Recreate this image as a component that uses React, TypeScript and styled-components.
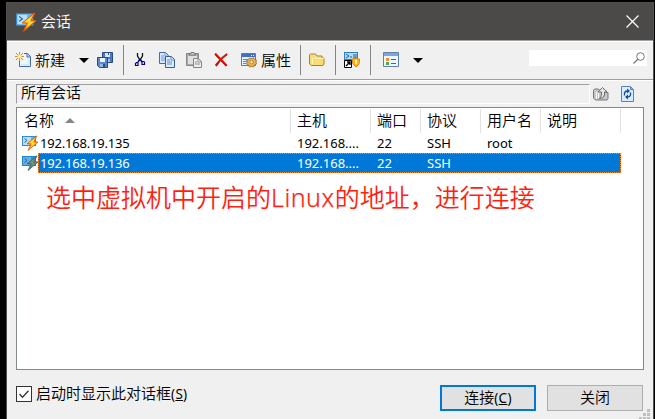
import React from "react";
import styled, { createGlobalStyle } from "styled-components";

const GlobalStyle = createGlobalStyle`
  * { box-sizing: border-box; }
  body {
    margin: 0;
    background: #000;
    color: #000;
    font-family: "Noto Sans", "Noto Sans CJK SC", sans-serif;
    font-size: 15px;
    font-weight: 350;
    line-height: 20px;
    overflow: hidden;
  }
  svg { display: block; flex: none; }
`;

const Desktop = styled.div`
  height: 419px;
  padding: 2px 1px 0 6px;
  background: #000;
`;
const Window = styled.main`
  display: flex;
  flex-direction: column;
  height: 417px;
  background: #f0f0f0;
  border: solid #51504e;
  border-width: 1px 1px 0 1px;
`;
const TitleBar = styled.header`
  display: flex;
  align-items: center;
  height: 37px;
  padding: 0 14px 0 9px;
  background: #4b4a48;
  color: #fff;
`;
const Title = styled.h1`
  flex: 1;
  margin: -2px 0 0 5px;
  font-size: 15px;
  font-weight: 350;
`;
const PlainButton = styled.button`
  display: flex;
  padding: 0;
  border: 0;
  background: none;
`;
const Toolbar = styled.div`
  display: flex;
  align-items: center;
  height: 40px;
  padding: 0 6px 0 8px;
  border-top: 1px solid #a0a0a0;
  border-bottom: 1px solid #a0a0a0;
  box-shadow: inset 0 1px #fff, 0 1px #fff;
`;
const Tool = styled.button<{ $gap?: number }>`
  display: flex;
  align-items: center;
  gap: 4px;
  height: 30px;
  margin: 0 0 0 ${(p) => p.$gap ?? 0}px;
  padding: 0;
  border: 0;
  background: none;
  font: inherit;
  white-space: nowrap;
`;
const Divider = styled.span<{ $gap: number }>`
  width: 1px;
  height: 30px;
  margin-left: ${(p) => p.$gap}px;
  background: #858585;
`;
const Search = styled.label`
  display: flex;
  align-items: center;
  width: 118px;
  height: 16px;
  margin: -4px 0 0 auto;
  padding-right: 2px;
  background: #fff;
`;
const SearchInput = styled.input`
  flex: 1;
  min-width: 0;
  height: 14px;
  padding: 0 2px;
  border: 0;
  outline: 0;
  background: transparent;
`;
const PathRow = styled.div`
  display: flex;
  align-items: center;
  height: 20px;
  margin: 4px 9px 0;
`;
const PathField = styled.div`
  width: 574px;
  height: 20px;
  padding: 0 4px;
  border: 1px solid;
  border-color: #a0a0a0 #fff #fff #a0a0a0;
  line-height: 15px;
  margin-right: 3px;
`;
const List = styled.section`
  height: 263px;
  margin: 3px 9px 0;
  padding-top: 1px;
  background: #fff;
  border: 1px solid #828790;
`;
const HeaderRow = styled.div`
  display: grid;
  grid-template-columns: 274px 80px 50px 60px 60px 80px;
  height: 24px;
`;
const HeaderCell = styled.div<{ $sorted?: boolean }>`
  display: flex;
  align-items: center;
  gap: 11px;
  padding: 0 0 2px ${(p) => (p.$sorted ? 7 : 6)}px;
  border-right: 1px solid #e2e2e2;
  white-space: nowrap;
`;
const SessionRow = styled.div`
  display: flex;
  align-items: center;
  height: 20px;
  padding-left: 5px;
`;
const RowCells = styled.div<{ $selected?: boolean }>`
  display: grid;
  grid-template-columns: 252px 80px 50px 60px 60px 80px;
  width: 583px;
  height: 20px;
  border: 1px dotted ${(p) => (p.$selected ? "#ff8728" : "transparent")};
  background: ${(p) => (p.$selected ? "#0078d7" : "transparent")};
  color: ${(p) => (p.$selected ? "#fff" : "#000")};
`;
const Cell = styled.span<{ $first?: boolean }>`
  padding-left: ${(p) => (p.$first ? 1 : 6)}px;
  font-size: 13px;
  font-weight: 400;
  line-height: 18px;
  letter-spacing: ${(p) => (p.$first ? -0.2 : 0)}px;
`;
const Note = styled.p`
  margin: 7px 0 0 29px;
  color: #ff1e10;
  font-size: 25px;
  font-weight: 350;
  line-height: 34px;
  white-space: nowrap;
`;
const Latin = styled.span`
  letter-spacing: 0.5px;
  -webkit-text-stroke: 0.25px #ff1e10;
`;
const Footer = styled.footer`
  display: flex;
  align-items: flex-start;
  flex: 1;
  padding: 15px 0 0 9px;
`;
const CheckLabel = styled.label`
  display: flex;
  align-items: center;
  gap: 4px;
  height: 18px;
  width: 424px;
  white-space: nowrap;
`;
const CheckText = styled.span`
  margin-top: -2px;
`;
const CheckBox = styled.span`
  display: flex;
  width: 16px;
  height: 16px;
  border: 1px solid #333;
  background: #fff;
`;
const Mnemonic = styled.span`
  font-size: 13.5px;
  font-weight: 400;
  letter-spacing: 0.3px;
`;
const PushButton = styled.button<{ $primary?: boolean }>`
  width: 96px;
  height: 26px;
  margin-right: ${(p) => (p.$primary ? 11 : 0)}px;
  padding: 0 0 2px;
  border: ${(p) => (p.$primary ? "2px solid #0078d7" : "1px solid #adadad")};
  background: #e1e1e1;
  font: inherit;
  line-height: 20px;
`;
const Grip = styled.span`
  align-self: flex-end;
  margin-left: -4px;
`;

const Svg = ({ w = 16, h = 16, children }: { w?: number; h?: number; children: React.ReactNode }) => (
  <svg width={w} height={h} viewBox={`0 0 ${w} ${h}`} fill="none">{children}</svg>
);

const SessionIcon = ({ large, dim }: { large?: boolean; dim?: boolean }) => (
  <svg width={large ? 20 : 16} height={large ? 20 : 16} viewBox="0 0 16 16">
    <path d="M0 1h14v10H0z" fill={dim ? "#2185c9" : "#328bd5"} />
    <path d="M1 2h12v8H1z" fill={dim ? "#65aee2" : "#b9def8"} />
    <path d="M9 2h4v3H9z" fill={dim ? "#3392d3" : "#62b2ed"} />
    <path d="M2.5 3.5 5 5.5l-2.5 2M6 8h2" stroke="#2261a5" fill="none" />
    <path d="M14.5 1 5 8.8l4 .2-3 6.5L16 7l-4-.3L15 1z" fill={dim ? "#61816e" : "#ffad16"} stroke={dim ? "#376579" : "#d65c0b"} strokeWidth=".8" />
    <path d="m13 3-6 5h3l-1 4 5-4h-3z" fill={dim ? "#789079" : "#ffdb38"} />
  </svg>
);
const NewIcon = () => (
  <Svg>
    <path d="M4.5 1.5h8l3 3v10h-11z" fill="#edf6ff" stroke="#426da5" />
    <path d="M12 2v3h3" stroke="#426da5" fill="#bcd7f4" />
    <path d="M6 13h8V7" stroke="#c7ddf4" />
    <path d="M0 1h9v8H4V8H0z" fill="#f5efdc" />
    <path d="M4.5 0v9M0 4.5h9M1 1l7 7M8 1 1 8" stroke="#dc8d18" />
    <path d="M4.5 2.5v4M2.5 4.5h4" stroke="#fff0a0" strokeWidth="2" />
  </Svg>
);
const SaveIcon = () => (
  <Svg>
    <path d="M5.5.5h10v10h-10z" fill="#4d78bd" stroke="#284b87" />
    <path d="M8 1h5v4H8z" fill="#dbe8fa" /><path d="M11 1h1v2h-1z" fill="#355b98" />
    <path d="M8 7h5v3H8z" fill="#a9c2e7" />
    <path d="M.5 5.5h10v10h-8l-2-2z" fill="#5b87cc" stroke="#284b87" />
    <path d="M3 6h5v4H3z" fill="#edf4ff" /><path d="M3 12h5v3H3z" fill="#9bb8e1" />
    <path d="M6 12h2v3H6z" fill="#294d85" />
  </Svg>
);
const CutIcon = () => (
  <Svg w={12} h={16}>
    <path d="M3.5 1v3l2.5 4 2.5-4V1" stroke="#111" strokeWidth="1.3" />
    <path d="m6 7-2 3m2-3 2 3" stroke="#000080" strokeWidth="1.4" />
    <path d="M4 10.5H2.5l-1 1v2H4v-3M8 9.5v3h2.5V10l-1-.5z" stroke="#000080" strokeWidth="1.2" />
  </Svg>
);
const CopyIcon = () => (
  <Svg>
    <path d="M.5.5h6l3 3v8h-9z" fill="#d3e5ff" stroke="#416bab" />
    <path d="M6 1v3h3M2 4h3M2 6h5M2 8h5" stroke="#6d9bda" />
    <path d="M6.5 4.5h6l3 3v8h-9z" fill="#e0edff" stroke="#335f9f" />
    <path d="M12 5v3h3M8 8h3M8 10h5M8 12h5" stroke="#5c8bcb" />
  </Svg>
);
const PasteIcon = () => (
  <Svg>
    <path d="M.5 1.5h12v12H.5z" fill="#aaa" stroke="#858585" />
    <path d="M2 4h9v8H2z" fill="#e0e0e0" />
    <path d="M3.5 3V1.5H5V.5h3v1h1.5V3z" fill="#d3d3d3" stroke="#777" />
    <path d="M7.5 6.5h5l3 3v6h-8z" fill="#eee" stroke="#858585" />
    <path d="M12 7v3h3M9 10h2M9 12h5" stroke="#8c8c8c" />
  </Svg>
);
const DeleteIcon = () => (
  <Svg w={14} h={14}>
    <path d="m1 1 11.5 12M13 1 7 6l-5 7" stroke="#8d1008" strokeWidth="1.8" />
    <path d="M1 1h1l11 11.5M13 1 7 6l-5.5 6" stroke="#f10b05" strokeWidth="1.3" />
  </Svg>
);
const PropertiesIcon = () => (
  <Svg>
    <path d="M.5 1.5h14v12H.5z" fill="#e5f0ff" stroke="#517ac0" />
    <path d="M1 2h13v3H1z" fill="#416fc5" /><path d="M10 3.5h1m1 0h1" stroke="#fff" />
    <path d="M2 7.5h5M2 9.5h4M2 11.5h3" stroke="#598bdb" />
    <path d="m8.5 6 2 .5 2-1 1 2 2 .5-.5 2 .5 2-2 1-1 2-2-.5-2 .5-1-2-2-1 1-2-1-2 2-.5z" fill="#e9b04c" stroke="#916019" strokeWidth=".7" />
    <circle cx="10.5" cy="10" r="1.7" fill="#fff" stroke="#c28125" />
  </Svg>
);
const FolderIcon = () => (
  <Svg>
    <path d="M.5 12V3l1-1h5L8 4h5v2h2v6l-1 1.5H2.5z" fill="#f8de7a" stroke="#ad812b" />
    <path d="M3 6.5h12M3.5 6v6" stroke="#fff2af" /><path d="M4 8h10M4 11h10" stroke="#f5d76c" />
  </Svg>
);
const SecureIcon = () => (
  <Svg>
    <path d="M0 0h14v9H0z" fill="#2680cb" /><path d="M1 1h12v6H1z" fill="#b3dcfa" />
    <path d="m2 2 3 2-3 2M6 5h2M10 2v4h2V2" stroke="#245d9d" />
    <path d="M8 7q4 0 4-1 1 1 3.5 1 .5 6-3.500 8-4-2-4-8" fill="#ffb414" stroke="#d88912" />
    <path d="M12 8v4" stroke="#fff2a0" strokeWidth="2" />
    <path d="M.5 8.5h7v7h-7z" fill="#fff" stroke="#000" />
    <path d="m2 14 4-4M3 10h3v3" stroke="#000" strokeWidth="1.3" />
  </Svg>
);
const ViewIcon = () => (
  <Svg>
    <path d="M.5.5h15v14H.5z" fill="#edf6ff" stroke="#6180ad" />
    <path d="M1 1h14v3H1z" fill="#7ca5db" />
    <path d="M3 6h3v3H3z" fill="#ec8e2b" /><path d="M3 10h3v3H3z" fill="#55a645" />
    <path d="M8 7.5h5M8 11.5h5" stroke="#466591" />
  </Svg>
);
const Caret = () => <Svg w={10} h={5}><path d="M0 0h10L5 5z" fill="#000" /></Svg>;
const UpIcon = () => (
  <Svg>
    <path d="M.5 12V4.5l1-1.500h4L7 4.5h6v2h2v6L14 14H2.5z" fill="#c8c8c8" stroke="#777" />
    <path d="M3.5 6v7M5.5 6v6" stroke="#f7f7f7" />
    <path d="M5 6 9.500 1.500 14 6h-2.500v3q-.5 3.500-5 3.500 2.500-2 2-6.500z" fill="#e5e5e5" stroke="#6c6c6c" />
  </Svg>
);
const RefreshIcon = () => (
  <Svg w={13} h={16}>
    <path d="M.5.5h9l3 3v12H.5z" fill="#d9ecff" stroke="#5483ba" />
    <path d="M9.5 1v2.5h3" fill="#7faee6" stroke="#5483ba" />
    <path d="M3.5 9.5V7q.5-2 3-2M9.5 6.5V9q-.5 2-3 2" stroke="#174d90" strokeWidth="1.3" />
    <path d="m6 2.5 3 2.500-3 2.500M7 8.500 4 11l3 2.500" fill="#174d90" />
  </Svg>
);

const sessions = [
  ["192.168.19.135", "192.168....", "22", "SSH", "root"],
  ["192.168.19.136", "192.168....", "22", "SSH", ""],
];

export default function App() {
  return (
    <>
      <GlobalStyle />
      <Desktop>
        <Window>
          <TitleBar>
            <SessionIcon large />
            <Title>会话</Title>
            <PlainButton aria-label="关闭">
              <Svg w={13} h={13}><path d="m.5.5 12 12M12.5.5l-12 12" stroke="#fff" strokeWidth="1.2" /></Svg>
            </PlainButton>
          </TitleBar>
          <Toolbar>
            <Tool><NewIcon />新建</Tool>
            <Tool $gap={14}><Caret /></Tool>
            <Tool $gap={8}><SaveIcon /></Tool>
            <Divider $gap={10} />
            <Tool $gap={10}><CutIcon /></Tool>
            <Tool $gap={13}><CopyIcon /></Tool>
            <Tool $gap={11}><PasteIcon /></Tool>
            <Tool $gap={12}><DeleteIcon /></Tool>
            <Tool $gap={13}><PropertiesIcon />属性</Tool>
            <Divider $gap={9} />
            <Tool $gap={8}><FolderIcon /></Tool>
            <Divider $gap={10} />
            <Tool $gap={8}><SecureIcon /></Tool>
            <Divider $gap={10} />
            <Tool $gap={12}><ViewIcon /></Tool>
            <Tool $gap={14}><Caret /></Tool>
            <Search>
              <SearchInput aria-label="搜索" />
              <Svg w={12} h={12}><circle cx="7.5" cy="4.5" r="3.8" stroke="#777" /><path d="m5 7-4.5 4.5" stroke="#777" strokeWidth="1.3" /></Svg>
            </Search>
          </Toolbar>
          <PathRow>
            <PathField>所有会话</PathField>
            <PlainButton><UpIcon /></PlainButton>
            <Tool $gap={12}><RefreshIcon /></Tool>
          </PathRow>
          <List>
            <HeaderRow>
              <HeaderCell $sorted>名称<Svg w={10} h={5}><path d="M0 5 5 0l5 5z" fill="#868686" /></Svg></HeaderCell>
              <HeaderCell>主机</HeaderCell>
              <HeaderCell>端口</HeaderCell>
              <HeaderCell>协议</HeaderCell>
              <HeaderCell>用户名</HeaderCell>
              <HeaderCell>说明</HeaderCell>
            </HeaderRow>
            {sessions.map((row, i) => (
              <SessionRow key={row[0]}>
                <SessionIcon dim={i === 1} />
                <RowCells $selected={i === 1}>
                  {row.map((value, j) => <Cell key={j} $first={j === 0}>{value}</Cell>)}
                </RowCells>
              </SessionRow>
            ))}
            <Note>选中虚拟机中开启的<Latin>Linux</Latin>的地址，进行连接</Note>
          </List>
          <Footer>
            <CheckLabel>
              <CheckBox><Svg w={14} h={14}><path d="m2.5 7 3 3.2L11.5 3.8" stroke="#333" strokeWidth="1.3" /></Svg></CheckBox>
              <CheckText>启动时显示此对话框<Mnemonic>(<u>S</u>)</Mnemonic></CheckText>
            </CheckLabel>
            <PushButton $primary>连接<Mnemonic>(<u>C</u>)</Mnemonic></PushButton>
            <PushButton>关闭</PushButton>
            <Grip>
              <Svg w={12} h={10}><path d="M8 0h3v3H8zM4 4h3v3H4zM8 4h3v3H8zM0 8h3v2H0zM4 8h3v2H4zM8 8h3v2H8z" fill="#bfbfbf" /></Svg>
            </Grip>
          </Footer>
        </Window>
      </Desktop>
    </>
  );
}
